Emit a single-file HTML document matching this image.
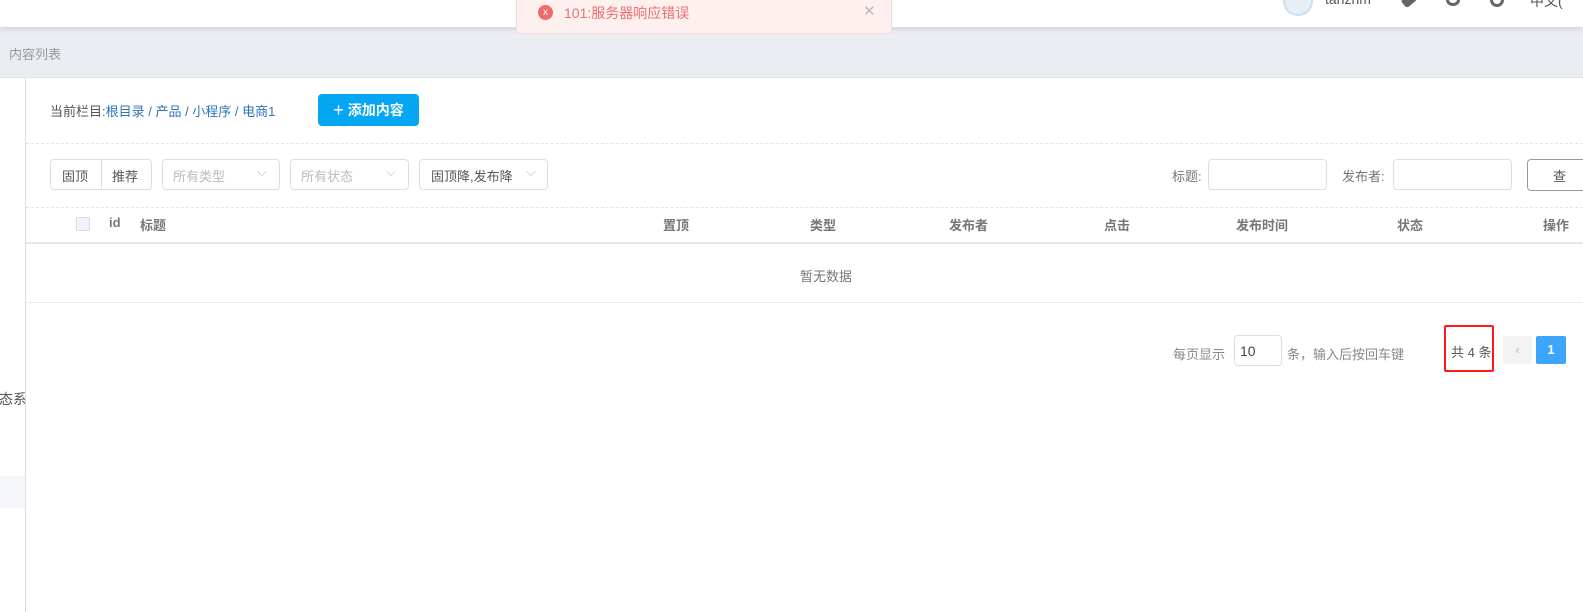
<!DOCTYPE html>
<html><head><meta charset="utf-8"><style>
*{box-sizing:border-box;margin:0;padding:0}
body{width:1583px;height:612px;overflow:hidden;background:#fff;font-family:"Liberation Sans","Noto Sans CJK SC",sans-serif;font-size:13px;color:#555;position:relative}
.a{position:absolute;white-space:nowrap}
.hdr{left:0;top:0;width:1583px;height:27px;background:#fff;box-shadow:0 2px 6px rgba(0,0,0,.12);z-index:2}
.band{left:0;top:27px;width:1583px;height:51px;background:#eaedf2;border-bottom:1px solid #e2e6ec}
.side{left:0;top:78px;width:26px;height:534px;border-right:1px solid #d7dde4;background:#fff;overflow:hidden}
.box{border:1px solid #dcdee2;border-radius:4px;background:#fff}
.dash{height:0;border-top:1px dashed #e3e6eb}
.th{top:215px;font-weight:bold;color:#777;font-size:13px}
.gray{color:#999}
</style></head><body>
<div class="a hdr">
  <div class="a" style="left:1283px;top:-14px;width:30px;height:30px;border-radius:50%;background:#e6eef7;border:2px solid #cfdff0"></div>
  <div class="a" style="left:1325px;top:-9px;font-size:14px;color:#555">tanzhm</div>
  <div class="a" style="left:1402px;top:-5px;width:14px;height:10px;background:#666;border-radius:3px;transform:rotate(-40deg)"></div>
  <div class="a" style="left:1446px;top:-6px;width:14px;height:12px;border:3px solid #666;border-radius:50%;border-top-color:transparent"></div>
  <div class="a" style="left:1490px;top:-7px;width:14px;height:14px;border:3px solid #666;border-radius:50%"></div>
  <div class="a" style="left:1530px;top:-9px;font-size:14px;color:#555">中文(</div>
</div>
<div class="a" style="left:516px;top:0;width:376px;height:34px;background:#fff0f0;border:1px solid #fbd6d6;border-top:none;border-radius:0 0 4px 4px;z-index:3">
  <div class="a" style="left:21px;top:5px;width:15px;height:15px;border-radius:50%;background:#f06a6a;color:#fff;font-size:10px;line-height:15px;text-align:center">x</div>
  <div class="a" style="left:47px;top:3px;color:#ed6e6e;font-size:14px">101:服务器响应错误</div>
  <div class="a" style="left:346px;top:2px;color:#bbb;font-size:15px">✕</div>
</div>
<div class="a band"><div class="a" style="left:9px;top:17px;color:#999">内容列表</div></div>
<div class="a side"><div class="a" style="left:0;top:398px;width:25px;height:32px;background:#f4f6fa"></div><div class="a" style="left:-1px;top:311px;font-size:14px">态系</div></div>
<div class="a" style="left:50px;top:101px">当前栏目:<span style="color:#2d74b8">根目录 / 产品 / 小程序 / 电商1</span></div>
<div class="a" style="left:318px;top:94px;width:101px;height:32px;background:#05a7f2;border-radius:4px;color:#fff;font-size:14px;line-height:32px;text-align:center;font-weight:bold"><span style="font-size:18px;vertical-align:-1px;font-weight:normal">+</span> 添加内容</div>
<div class="a dash" style="left:26px;top:143px;width:1557px"></div>
<div class="a box" style="left:50px;top:159px;width:102px;height:31px"><span class="a" style="left:11px;top:6px">固顶</span><div class="a" style="left:50px;top:0;width:1px;height:29px;background:#dcdee2"></div><span class="a" style="left:61px;top:6px">推荐</span></div>
<div class="a box" style="left:162px;top:159px;width:118px;height:31px"><span class="a gray" style="left:10px;top:6px;color:#bbb">所有类型</span><span class="a" style="left:94px;top:4px;color:#bbb">⌵</span></div>
<div class="a box" style="left:290px;top:159px;width:119px;height:31px"><span class="a" style="left:10px;top:6px;color:#bbb">所有状态</span><span class="a" style="left:95px;top:4px;color:#bbb">⌵</span></div>
<div class="a box" style="left:419px;top:159px;width:129px;height:31px"><span class="a" style="left:11px;top:6px">固顶降,发布降</span><span class="a" style="left:106px;top:4px;color:#bbb">⌵</span></div>
<div class="a gray" style="left:1172px;top:166px;color:#777">标题:</div>
<div class="a box" style="left:1208px;top:159px;width:119px;height:31px"></div>
<div class="a" style="left:1342px;top:166px;color:#777">发布者:</div>
<div class="a box" style="left:1393px;top:159px;width:119px;height:31px"></div>
<div class="a" style="left:1527px;top:159px;width:70px;height:32px;border:1px solid #999;border-radius:4px"><span class="a" style="left:25px;top:6px">查</span></div>
<div class="a dash" style="left:26px;top:207px;width:1557px"></div>
<div class="a" style="left:76px;top:217px;width:14px;height:14px;border:1px solid #d8dde6;background:#eef3fb;border-radius:2px"></div>
<div class="a th" style="left:109px">id</div>
<div class="a th" style="left:140px">标题</div>
<div class="a th" style="left:663px">置顶</div>
<div class="a th" style="left:810px">类型</div>
<div class="a th" style="left:949px">发布者</div>
<div class="a th" style="left:1104px">点击</div>
<div class="a th" style="left:1236px">发布时间</div>
<div class="a th" style="left:1397px">状态</div>
<div class="a th" style="left:1543px">操作</div>
<div class="a" style="left:26px;top:242px;width:1557px;height:2px;background:#e4e8ee"></div>
<div class="a" style="left:800px;top:266px;color:#777">暂无数据</div>
<div class="a" style="left:26px;top:302px;width:1557px;height:1px;background:#e8ebef"></div>
<div class="a" style="left:1173px;top:344px;color:#888">每页显示</div>
<div class="a box" style="left:1234px;top:335px;width:48px;height:31px"><span class="a" style="left:5px;top:7px;color:#444;font-size:14px">10</span></div>
<div class="a" style="left:1287px;top:344px;color:#888">条，输入后按回车键</div>
<div class="a" style="left:1444px;top:325px;width:50px;height:47px;border:2px solid #ff1a1a;border-radius:2px"></div>
<div class="a" style="left:1451px;top:342px;color:#555">共 4 条</div>
<div class="a" style="left:1503px;top:336px;width:29px;height:28px;background:#f3f3f3;border-radius:2px;color:#bbb;text-align:center;line-height:28px">‹</div>
<div class="a" style="left:1536px;top:336px;width:30px;height:28px;background:#3da5fb;border-radius:2px;color:#fff;font-weight:bold;text-align:center;line-height:28px">1</div>
</body></html>
